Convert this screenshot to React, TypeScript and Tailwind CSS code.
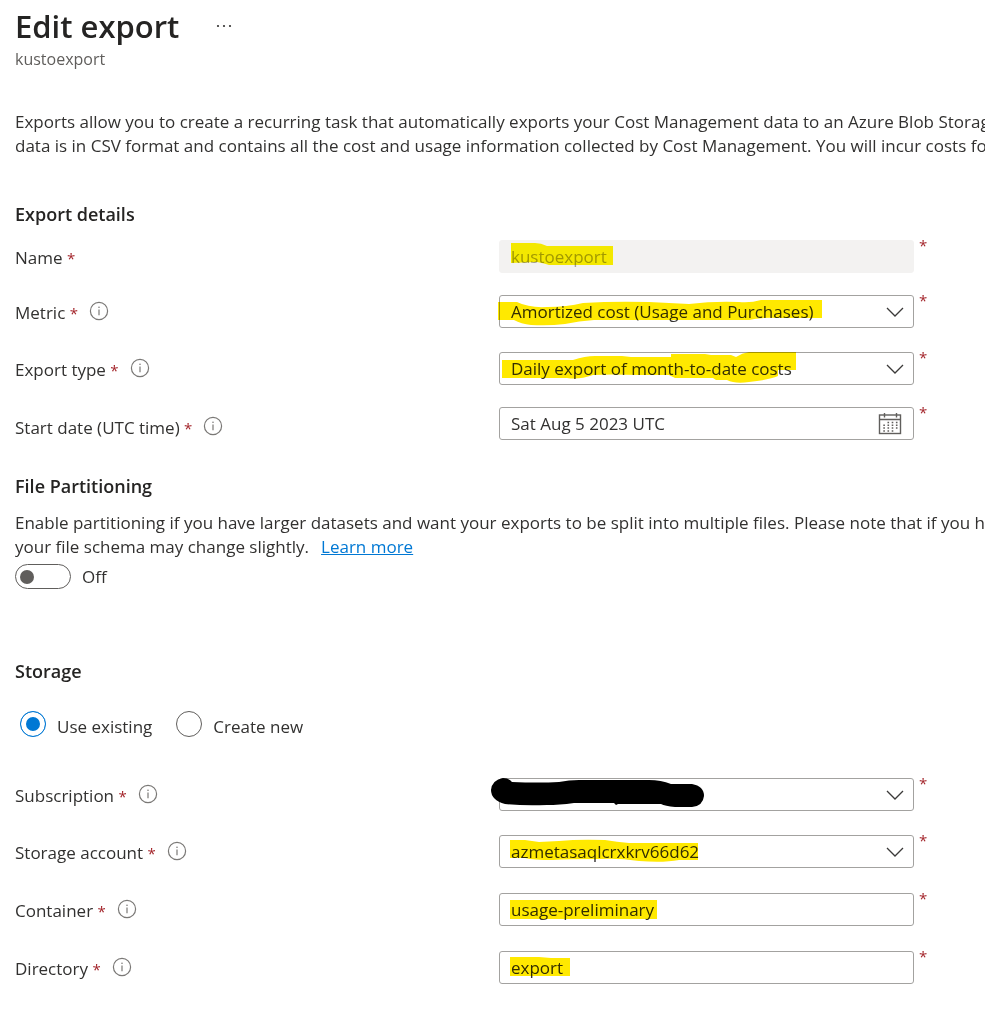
import { useState, type ReactNode } from "react";

const field =
  "block h-[33px] w-full appearance-none rounded-[3px] border border-[#a3a2a0] bg-white px-[11px] text-[17px] leading-[31px] text-[#323130] outline-none focus:border-[#0078d4] disabled:border-[#f3f2f1] disabled:bg-[#f3f2f1] disabled:text-[#a19f9d] disabled:opacity-100";

function Info({ about }: { about: string }) {
  return (
    <button type="button" aria-label={`More about ${about}`} className="mb-1 ml-[11px] block">
      <svg width="20" height="20" viewBox="0 0 20 20" fill="none" stroke="#7a7876" strokeWidth="1.2">
        <circle cx="10" cy="10" r="8.6" />
        <path d="M10 8.4v5.8" />
        <circle cx="10" cy="6.2" r="0.8" fill="#7a7876" stroke="none" />
      </svg>
    </button>
  );
}

function Chevron() {
  return (
    <svg
      className="pointer-events-none absolute top-[11px] right-[10px]"
      width="18"
      height="12"
      viewBox="0 0 18 12"
      fill="none"
      stroke="#3b3a39"
      strokeWidth="1.3"
    >
      <path d="M1 2l8 8 8-8" />
    </svg>
  );
}

function Calendar() {
  return (
    <svg
      className="pointer-events-none absolute top-[5px] right-3"
      width="24"
      height="24"
      viewBox="0 0 24 24"
      fill="none"
      stroke="#605e5c"
      strokeWidth="1.4"
    >
      <rect x="1.5" y="3" width="21" height="18.5" />
      <path d="M1.5 7.5h21M6.5 1v4.5M18.5 1v4.5" />
      <path
        d="M9.5 10.5h10.5M5.3 13.3h14.7M5.3 16.1h14.7M5.3 18.9h10.5"
        strokeWidth="1.5"
        strokeDasharray="1.6 2.6"
      />
    </svg>
  );
}

/* Marker strokes are laid over the field, in the field's own coordinates. */
function Marker({ d, fill = "#ffe900" }: { d: string; fill?: string }) {
  return (
    <svg
      aria-hidden="true"
      className="pointer-events-none absolute top-0 left-0 overflow-visible mix-blend-multiply"
      width="340"
      height="33"
      fill={fill}
    >
      <path d={d} />
    </svg>
  );
}

type RowProps = {
  id: string;
  label: string;
  info?: boolean;
  tall?: boolean;
  className?: string;
  children: ReactNode;
};

function Row({ id, label, info = true, tall = false, className = "", children }: RowProps) {
  return (
    <div className={`flex h-[33px] items-start ${className}`}>
      <div className={`flex w-[484px] shrink-0 items-center ${tall ? "h-[42px]" : "h-9"}`}>
        <label htmlFor={id}>
          {label} <span className="text-[15px] text-[#a4262c]">*</span>
        </label>
        {info && <Info about={label} />}
      </div>
      <div className="relative min-w-0 flex-1">{children}</div>
      <span className="ml-[5px] w-[9px] shrink-0 text-[15px] leading-[11px] text-[#a4262c]">*</span>
    </div>
  );
}

export default function App() {
  const [on, setOn] = useState(false);
  const [mode, setMode] = useState("existing");

  return (
    <main className="overflow-hidden bg-white pb-10 pl-[15px] font-['Open_Sans','Noto_Sans',sans-serif] text-[17px] leading-6 text-[#323130]">
      <header>
        <div className="flex h-12 items-center pt-1">
          <h1 className="text-[31px] leading-10 font-semibold text-[#252423]">Edit export</h1>
          <button type="button" aria-label="More actions" className="ml-9 block">
            <svg width="18" height="6" viewBox="0 0 18 6" fill="#323130">
              <circle cx="3" cy="3" r="1.1" />
              <circle cx="9" cy="3" r="1.1" />
              <circle cx="15" cy="3" r="1.1" />
            </svg>
          </button>
        </div>
        <p className="text-[16px] leading-[22px] text-[#605e5c]">kustoexport</p>
      </header>

      <p className="mt-10 whitespace-nowrap">
        Exports allow you to create a recurring task that automatically exports your Cost Management data to an Azure Blob Storage
        <br />
        data is in CSV format and contains all the cost and usage information collected by Cost Management. You will incur costs for
      </p>

      <section className="pr-[57px]">
        <h2 className="mt-11 text-[18px] font-semibold text-[#252423]">Export details</h2>
        <Row id="name" label="Name" info={false} className="mt-[14px]">
          <input id="name" className={field} defaultValue="kustoexport" disabled />
          <Marker fill="#fff500" d="M12 3H36Q42 3 48 6H114V25H50Q44 23 38 22L12 23Z" />
        </Row>
        <Row id="metric" label="Metric" className="mt-[22px]">
          <select id="metric" className={field}>
            <option>Amortized cost (Usage and Purchases)</option>
          </select>
          <Chevron />
          <Marker d="M-1 7H18Q30 13 48 12Q68 12 84 8Q115 6 150 7L190 9Q215 6 240 7Q252 8 262 5H323V23H280Q262 22 250 25H95Q80 26 66 29Q50 31 32 30Q22 29 15 25H-1Z" />
        </Row>
        <Row id="type" label="Export type" className="mt-6">
          <select id="type" className={field}>
            <option>Daily export of month-to-date costs</option>
          </select>
          <Chevron />
          <Marker d="M3 8H74Q86 4 96 4H123L132 5H172V2H206L212 3H232L237 5Q243 1 250 0H297V18H279V24Q270 28 250 30Q236 32 228 28H217L214 26H176L170 23H140Q110 22 94 23Q80 28 68 26H3Z" />
        </Row>
        <Row id="start" label="Start date (UTC time)" tall className="mt-[22px]">
          <input id="start" className={field} defaultValue="Sat Aug 5 2023 UTC" />
          <Calendar />
        </Row>
      </section>

      <section>
        <h2 className="mt-[34px] text-[18px] font-semibold text-[#252423]">File Partitioning</h2>
        <p className="mt-[13px] whitespace-nowrap">
          Enable partitioning if you have larger datasets and want your exports to be split into multiple files. Please note that if you have
          <br />
          your file schema may change slightly.
          <a href="#learn" className="ml-3 text-[#0078d4] underline">
            Learn more
          </a>
        </p>
        <div className="mt-[5px] flex h-[25px] items-center">
          <button
            type="button"
            role="switch"
            aria-checked={on}
            aria-labelledby="partition-state"
            onClick={() => setOn(!on)}
            className={`flex h-[25px] w-14 items-center rounded-full border border-[#605e5c] px-1 ${on ? "justify-end" : "justify-start"}`}
          >
            <span className="size-[14px] rounded-full bg-[#605e5c]" />
          </button>
          <span id="partition-state" className="ml-[11px]">
            {on ? "On" : "Off"}
          </span>
        </div>
      </section>

      <section className="pr-[57px]">
        <h2 className="mt-[70px] text-[18px] font-semibold text-[#252423]">Storage</h2>
        <div className="mt-7 ml-[5px] flex gap-6">
          {[
            ["existing", "Use existing"],
            ["new", "Create new"],
          ].map(([value, text]) => (
            <label key={value} className="flex items-start">
              <input
                type="radio"
                name="storage"
                value={value}
                checked={mode === value}
                onChange={() => setMode(value)}
                className="size-[26px] appearance-none rounded-full border border-[#605e5c] bg-white checked:border-[#0078d4] checked:bg-[#0078d4] checked:shadow-[inset_0_0_0_5px_#fff]"
              />
              <span className="mt-1 ml-[11px]">{text}</span>
            </label>
          ))}
        </div>
        <Row id="subscription" label="Subscription" className="mt-[39px]">
          <select id="subscription" className={field} />
          <Chevron />
          <svg
            aria-hidden="true"
            className="pointer-events-none absolute top-0 left-0 overflow-visible"
            width="210"
            height="33"
          >
            <path d="M4 0Q10 0 13 4Q40 5 60 4Q70 2 80 2H150Q162 2 172 6H193Q205 8 205 18Q204 28 193 29H176Q166 28 162 26H119L117 27L115 25H75Q60 27 48 27Q25 28 6 26Q-8 22 -8 12Q-7 2 4 0Z" />
          </svg>
        </Row>
        <Row id="account" label="Storage account" className="mt-6">
          <select id="account" className={field}>
            <option>azmetasaqlcrxkrv66d62</option>
          </select>
          <Chevron />
          <Marker d="M11 5H26L40 7L60 6Q80 4 106 5Q118 7 130 8H199V25H180Q164 28 140 26Q120 23 100 24Q70 24 54 25Q34 25 26 23H11Z" />
        </Row>
        <Row id="container" label="Container" className="mt-[25px]">
          <input id="container" className={field} defaultValue="usage-preliminary" />
          <Marker d="M11 7H158V26H11Z" />
        </Row>
        <Row id="directory" label="Directory" className="mt-[25px]">
          <input id="directory" className={field} defaultValue="export" />
          <Marker d="M11 6H40L52 7H71V25H11Z" />
        </Row>
      </section>
    </main>
  );
}
